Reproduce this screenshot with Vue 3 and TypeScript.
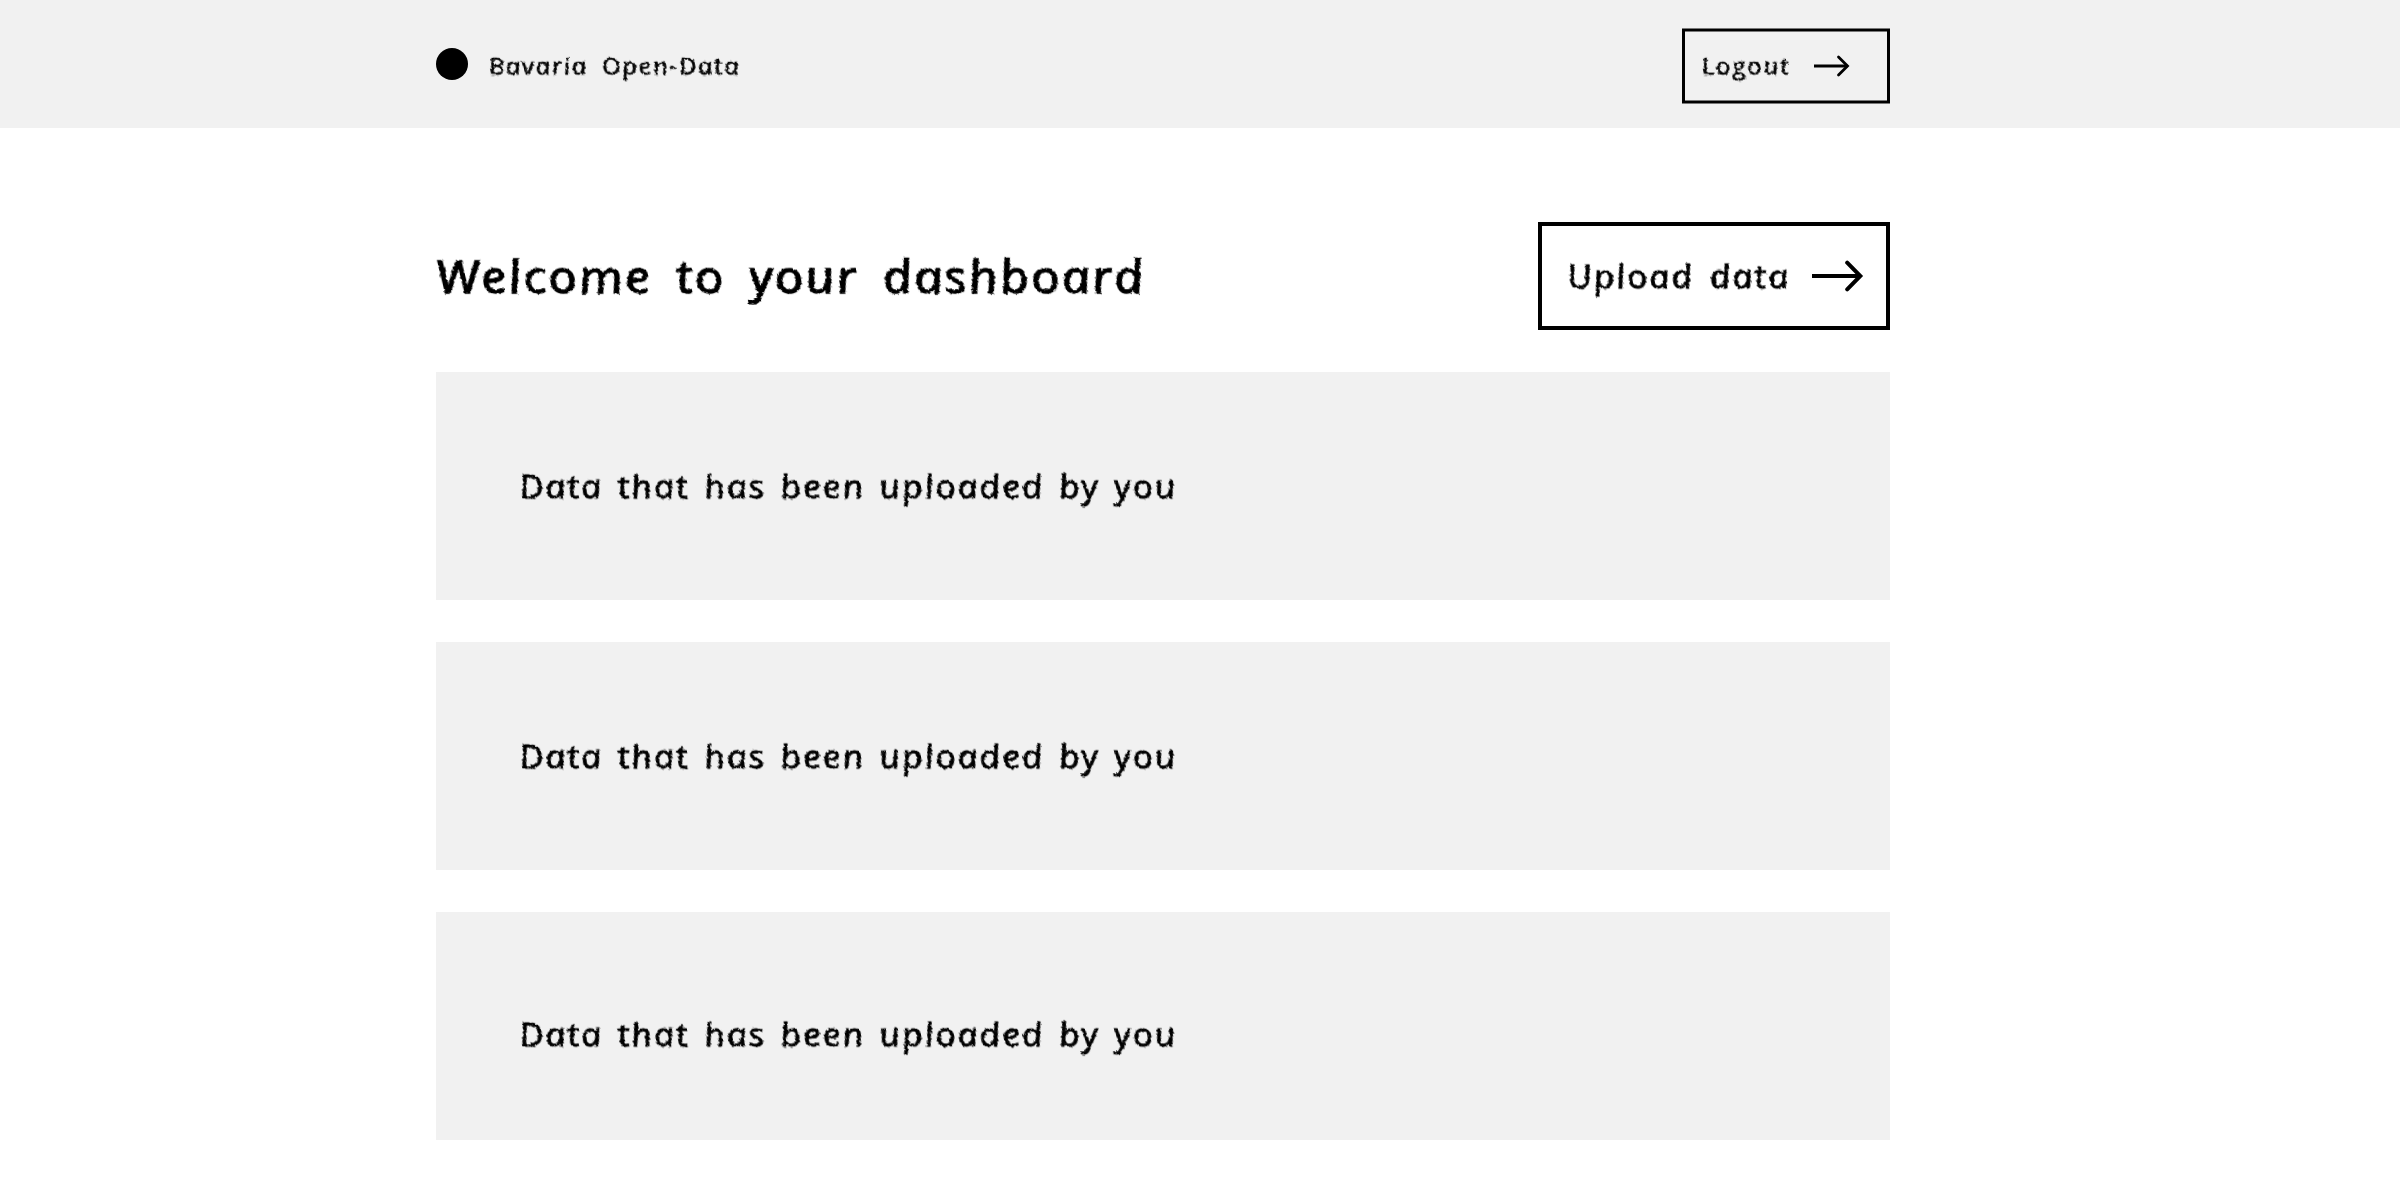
<script setup lang="ts">
interface Entry {
  id: number
  label: string
}

const entries: Entry[] = [1, 2, 3].map((id) => ({
  id,
  label: 'Data that has been uploaded by you',
}))
</script>

<template>
  <div class="page">
    <header class="topbar">
      <div class="container bar">
        <div class="brand">
          <span class="dot"></span>
          <span class="hand brand-name">Bavaria Open-Data</span>
        </div>
        <button class="logout">
          <svg class="frame" width="208" height="76" viewBox="0 0 208 76">
            <rect x="1.5" y="2" width="205" height="72" />
          </svg>
          <span class="hand logout-label">Logout</span>
          <svg class="arrow-small" width="36" height="24" viewBox="0 0 36 24">
            <path d="M0 12H33.5" />
            <path d="M24.5 3L33.5 12L24.5 21" stroke-linecap="round" />
          </svg>
        </button>
      </div>
    </header>
    <main class="container">
      <div class="intro">
        <h1 class="hand title">Welcome to your dashboard</h1>
        <button class="upload">
          <span class="hand upload-label">Upload data</span>
          <svg class="arrow-large" width="52" height="32" viewBox="0 0 52 32">
            <path d="M0 16H48" />
            <path d="M35.2 2.7L48.3 16L35.2 29.3" stroke-linecap="round" />
          </svg>
        </button>
      </div>
      <section class="cards">
        <article v-for="entry in entries" :key="entry.id" class="card">
          <span class="hand card-label">{{ entry.label }}</span>
        </article>
      </section>
    </main>
    <!-- Chalk edge for the lettering -->
    <svg class="defs" width="0" height="0" aria-hidden="true">
      <filter id="chalk" x="-5%" y="-20%" width="110%" height="140%" color-interpolation-filters="sRGB">
        <feTurbulence type="fractalNoise" baseFrequency="0.35" numOctaves="2" seed="4" result="noise" />
        <feDisplacementMap in="SourceGraphic" in2="noise" scale="3" xChannelSelector="R" yChannelSelector="G" />
      </filter>
    </svg>
  </div>
</template>

<style>
body {
  background: #fff;
}
</style>

<style scoped>
.page {
  position: relative;
  min-height: 1200px;
  color: #000;
}
.defs {
  position: absolute;
  left: 0;
  top: 0;
}
.container {
  width: 1454px;
  margin-left: 436px;
}
/* Italic letterforms set upright give the single-storey, handwritten shapes */
.hand {
  display: inline-block;
  font-family: 'Open Sans', 'Noto Sans', sans-serif;
  font-style: italic;
  font-weight: 500;
  white-space: nowrap;
  transform-origin: 0 75%;
  transform: skewX(11deg) scaleX(1.12);
  -webkit-text-stroke: 0.8px #000;
  filter: url(#chalk);
}
.topbar {
  height: 128px;
  background: #f1f1f1;
}
.bar {
  display: flex;
  justify-content: space-between;
  align-items: flex-start;
}
.brand {
  display: flex;
  align-items: center;
  gap: 22px;
  margin-top: 48px;
  height: 32px;
}
.dot {
  width: 32px;
  height: 32px;
  border-radius: 50%;
  background: #000;
}
.brand-name {
  font-size: 23px;
  line-height: 32px;
  letter-spacing: 1.45px;
  word-spacing: 5px;
  margin-top: 3px;
  -webkit-text-stroke-width: 0.6px;
}
button {
  position: relative;
  display: flex;
  box-sizing: border-box;
  padding: 0;
  border: 0;
  background: none;
  color: #000;
}
svg {
  fill: none;
  stroke: #000;
}
.logout {
  width: 208px;
  height: 76px;
  margin-top: 28px;
  padding-left: 24px;
}
.frame {
  position: absolute;
  left: 0;
  top: 0;
  stroke-width: 3;
}
.logout-label {
  width: 108px;
  font-size: 23px;
  line-height: 32px;
  letter-spacing: 1.6px;
  text-align: left;
  margin-top: 22px;
  -webkit-text-stroke-width: 0.6px;
}
.arrow-small {
  stroke-width: 2.8;
  margin-top: 26px;
}
.intro {
  display: flex;
  justify-content: space-between;
  height: 244px;
}
.title {
  margin: 120px 0 0 2px;
  height: 56px;
  font-size: 45px;
  line-height: 56px;
  letter-spacing: 1.9px;
  word-spacing: 8px;
  -webkit-text-stroke-width: 1.3px;
}
.upload {
  width: 352px;
  height: 108px;
  margin-top: 94px;
  padding-left: 31px;
  border: 4px solid #000;
}
.upload-label {
  width: 239px;
  font-size: 32px;
  line-height: 44px;
  letter-spacing: 1.7px;
  word-spacing: 4px;
  text-align: left;
  margin-top: 28px;
}
.arrow-large {
  stroke-width: 4;
  margin-top: 34px;
}
.cards {
  display: flex;
  flex-direction: column;
  gap: 42px;
}
.card {
  height: 228px;
  background: #f1f1f1;
}
.card-label {
  margin: 92px 0 0 85px;
  font-size: 32px;
  line-height: 44px;
  letter-spacing: 1.65px;
  word-spacing: 3px;
}
.card:last-child .card-label {
  margin-top: 100px;
}
</style>
